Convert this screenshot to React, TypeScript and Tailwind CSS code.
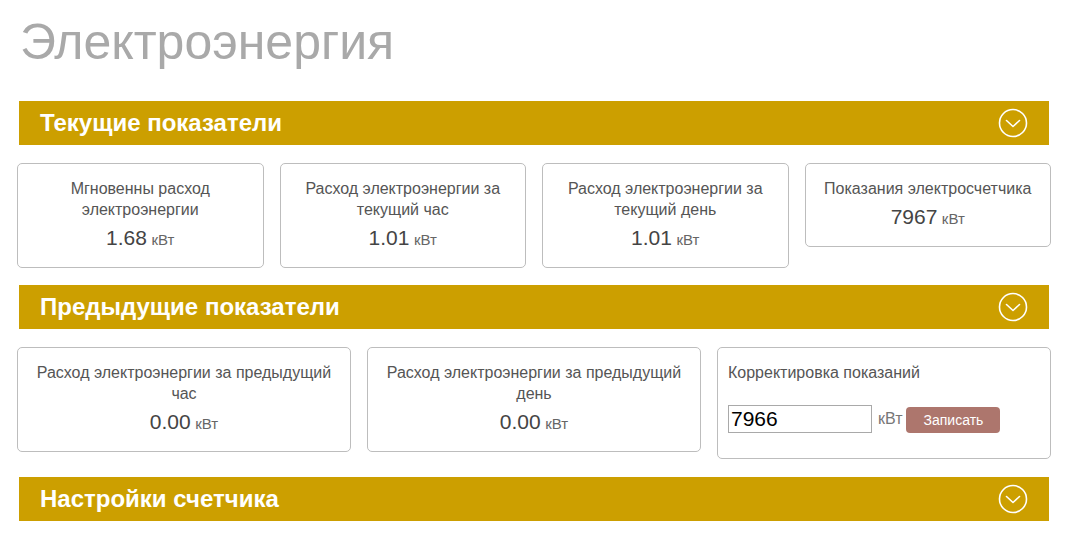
const font = { fontFamily: '"Liberation Sans", Arial, sans-serif' };

function ChevronCircle() {
  return (
    <svg width="30" height="30" viewBox="0 0 30 30" fill="none">
      <circle cx="15" cy="15" r="13.5" stroke="white" strokeWidth="1.6" />
      <path d="M8.5 12.5 L15 18.5 L21.5 12.5" stroke="white" strokeWidth="1.6" strokeLinecap="round" strokeLinejoin="round" />
    </svg>
  );
}

function SectionBar({ title }: { title: string }) {
  return (
    <div className="mx-[2px] flex h-[44px] items-center justify-between bg-[#cc9f00] pl-[21px] pr-[21px]">
      <span className="text-[24px] font-bold text-white">{title}</span>
      <ChevronCircle />
    </div>
  );
}

function Stat({ title, value }: { title: React.ReactNode; value: string }) {
  return (
    <div className="rounded-[5px] border border-[#bdbdbd] px-3 pt-[14px] pb-[15px] text-center">
      <div className="text-[16px] leading-[21px] text-[#555]">{title}</div>
      <div className="mt-[6px] leading-[24px] text-[#444]">
        <span className="text-[21px]">{value}</span>{" "}
        <span className="text-[15px] text-[#666]">кВт</span>
      </div>
    </div>
  );
}

export default function App() {
  return (
    <div className="min-h-[540px] bg-white pl-[17px] pr-[17px]" style={font}>
      <h1 className="pl-[3px] pt-[13px] pb-[30px] text-[50px] leading-[58px] text-[#a9a9a9]">
        Электроэнергия
      </h1>

      <div className="w-[1034px]">
        <SectionBar title="Текущие показатели" />

        <div className="mt-[18px] grid grid-cols-4 items-start gap-x-[16px]">
          <Stat title={<>Мгновенны расход<br />электроэнергии</>} value="1.68" />
          <Stat title={<>Расход электроэнергии за<br />текущий час</>} value="1.01" />
          <Stat title={<>Расход электроэнергии за<br />текущий день</>} value="1.01" />
          <Stat title="Показания электросчетчика" value="7967" />
        </div>

        <div className="mt-[17px]">
          <SectionBar title="Предыдущие показатели" />
        </div>

        <div className="mt-[18px] grid grid-cols-3 items-start gap-x-[16px]">
          <Stat title={<>Расход электроэнергии за предыдущий<br />час</>} value="0.00" />
          <Stat title={<>Расход электроэнергии за предыдущий<br />день</>} value="0.00" />
          <div className="rounded-[5px] border border-[#bdbdbd] pl-[10px] pt-[14px] pb-[25px]">
            <div className="text-[16px] leading-[21px] text-[#555]">Корректировка показаний</div>
            <div className="mt-[21px] flex items-center">
              <input
                defaultValue="7966"
                className="h-[28px] w-[144px] border border-[#a9a9a9] px-[2px] text-[21px] text-black outline-none"
                style={font}
              />
              <span className="ml-[6px] text-[16px] text-[#777]">кВт</span>
              <button className="ml-[4px] mt-[3px] h-[26px] w-[94px] rounded-[4px] bg-[#ad766d] text-[14px] text-white">
                Записать
              </button>
            </div>
          </div>
        </div>

        <div className="mt-[18px]">
          <SectionBar title="Настройки счетчика" />
        </div>
      </div>
    </div>
  );
}
